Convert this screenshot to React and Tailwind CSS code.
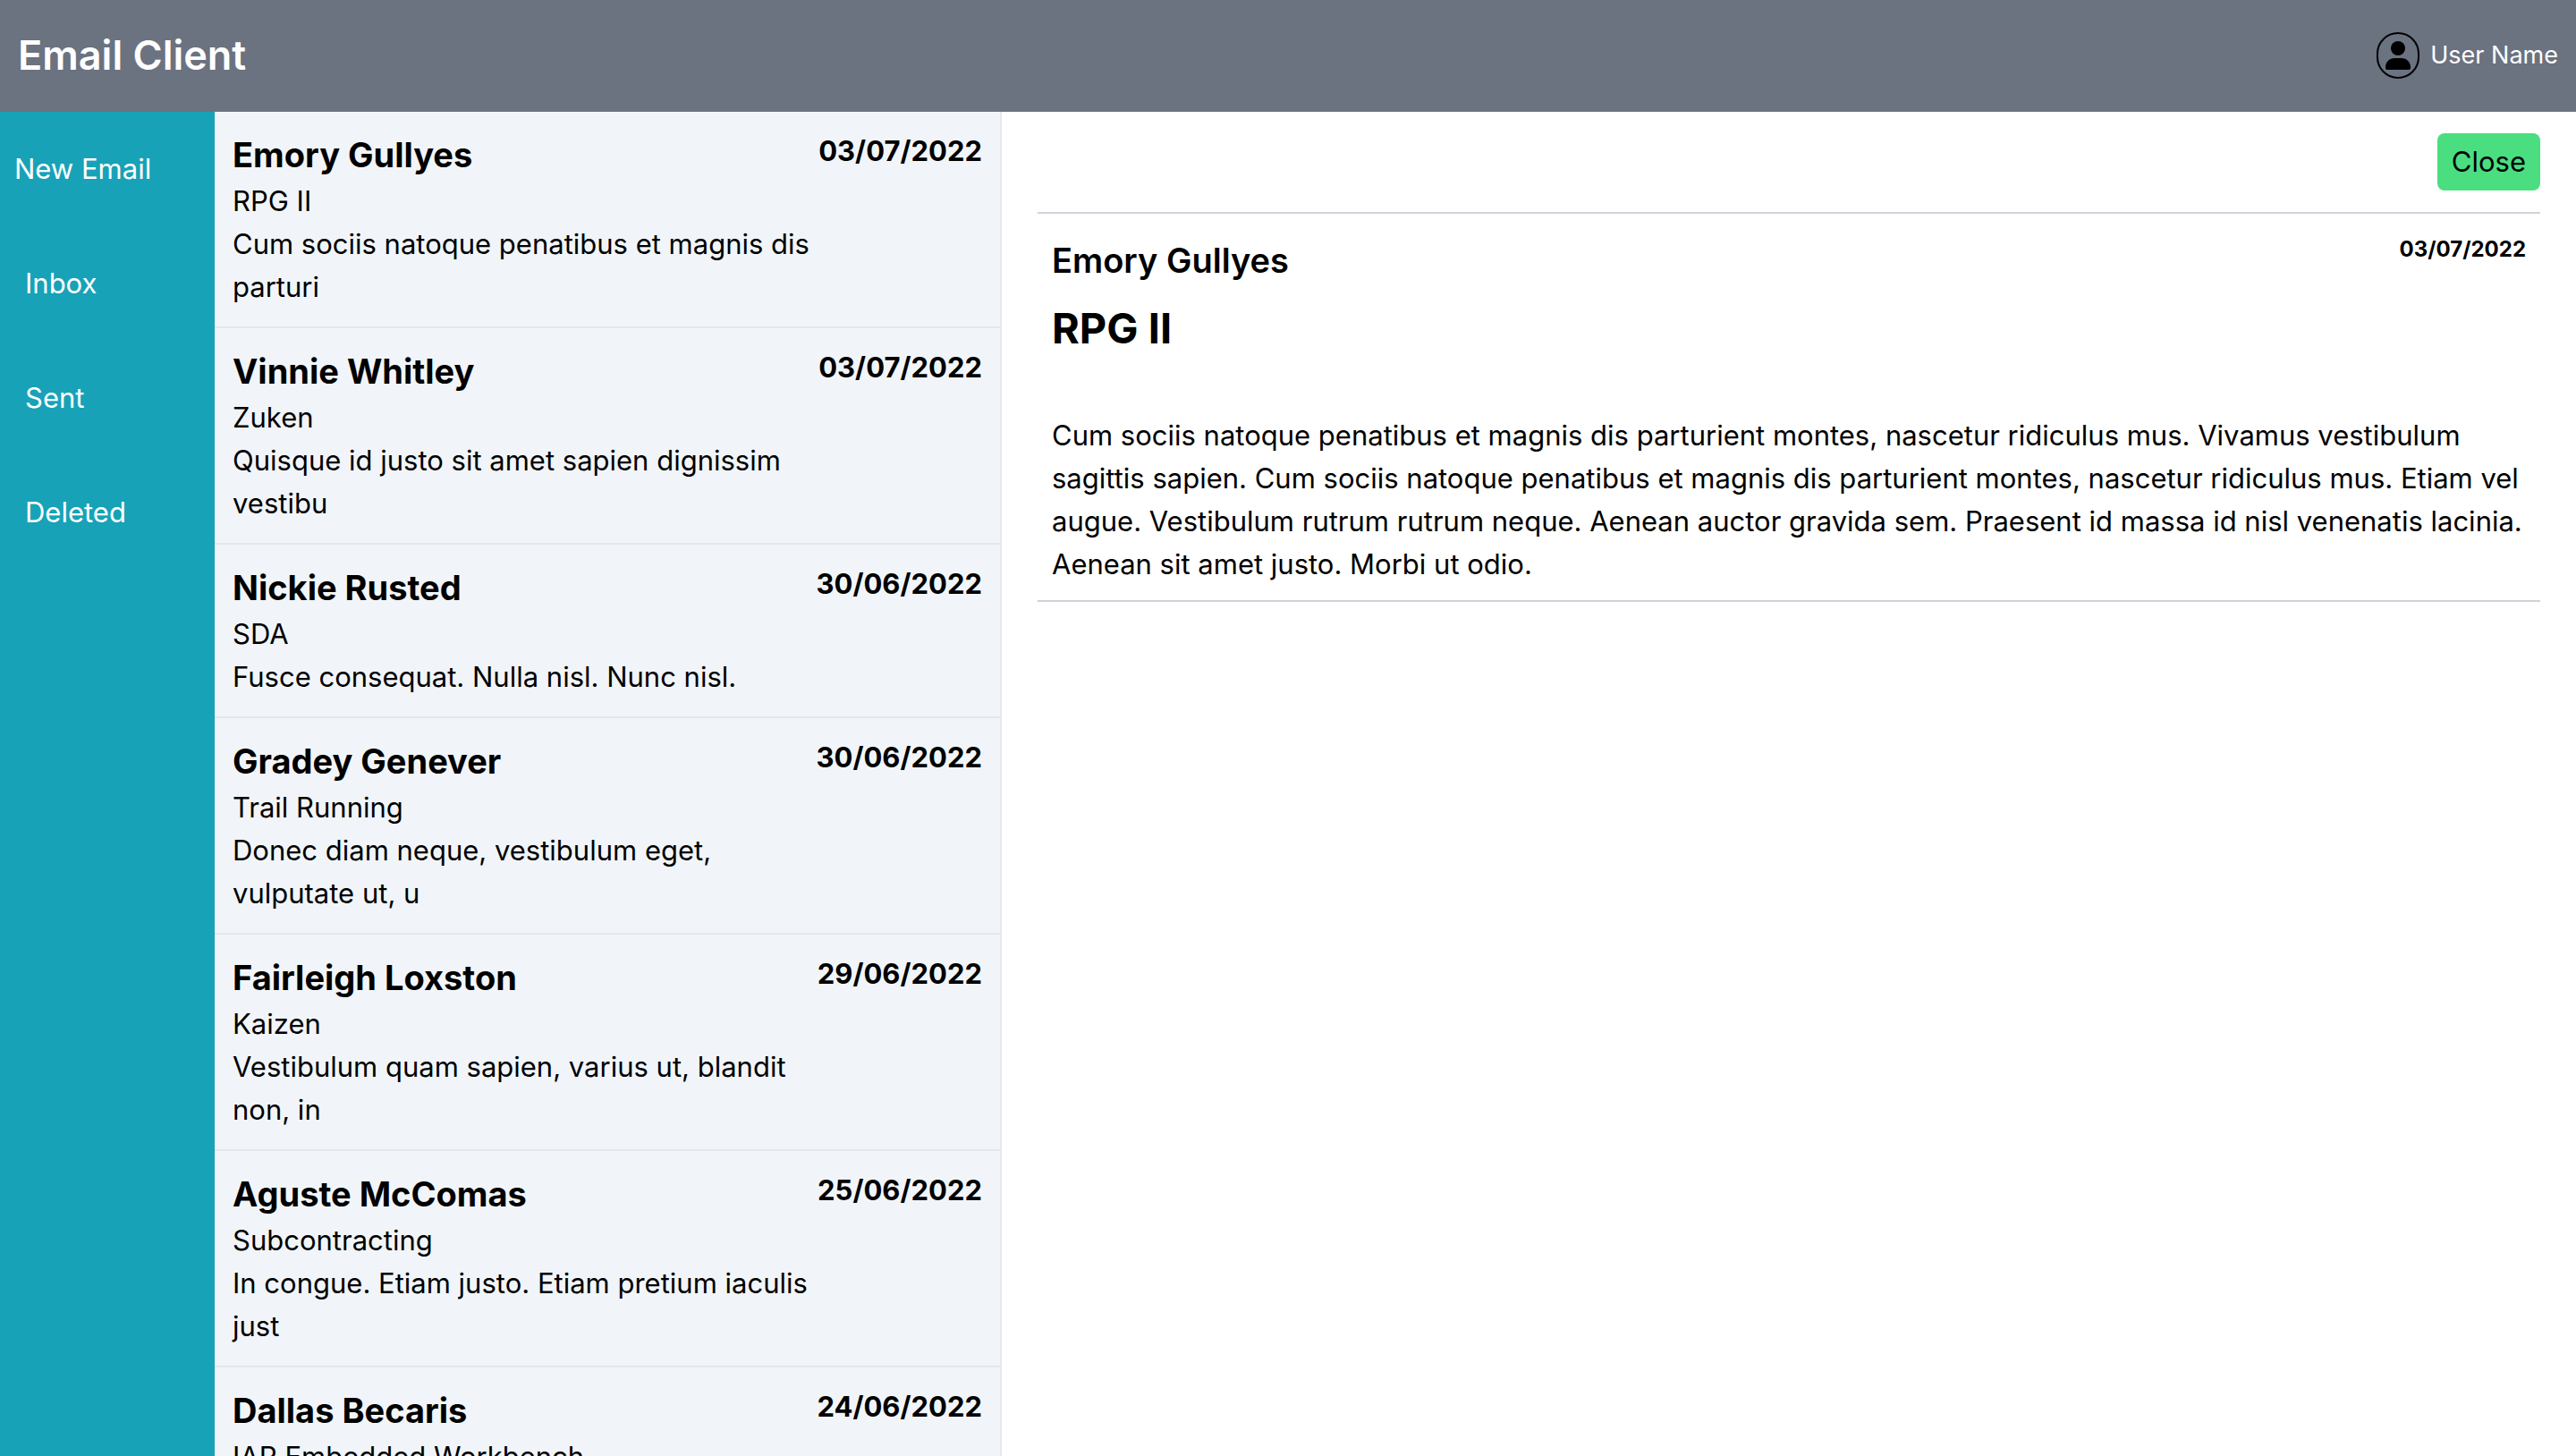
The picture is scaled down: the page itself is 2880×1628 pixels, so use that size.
const folders = ["Inbox", "Sent", "Deleted"];

const emails = [
  { id: 1, name: "Emory Gullyes", subject: "RPG II", preview: "Cum sociis natoque penatibus et magnis dis parturi", date: "03/07/2022" },
  { id: 2, name: "Vinnie Whitley", subject: "Zuken", preview: "Quisque id justo sit amet sapien dignissim vestibu", date: "03/07/2022" },
  { id: 3, name: "Nickie Rusted", subject: "SDA", preview: "Fusce consequat. Nulla nisl. Nunc nisl.", date: "30/06/2022" },
  { id: 4, name: "Gradey Genever", subject: "Trail Running", preview: "Donec diam neque, vestibulum eget, vulputate ut, u", date: "30/06/2022" },
  { id: 5, name: "Fairleigh Loxston", subject: "Kaizen", preview: "Vestibulum quam sapien, varius ut, blandit non, in", date: "29/06/2022" },
  { id: 6, name: "Aguste McComas", subject: "Subcontracting", preview: "In congue. Etiam justo. Etiam pretium iaculis just", date: "25/06/2022" },
  { id: 7, name: "Dallas Becaris", subject: "IAR Embedded Workbench", preview: "", date: "24/06/2022" },
];

const body =
  "Cum sociis natoque penatibus et magnis dis parturient montes, nascetur ridiculus mus. Vivamus vestibulum sagittis sapien. Cum sociis natoque penatibus et magnis dis parturient montes, nascetur ridiculus mus. Etiam vel augue. Vestibulum rutrum rutrum neque. Aenean auctor gravida sem. Praesent id massa id nisl venenatis lacinia. Aenean sit amet justo. Morbi ut odio.";

function UserIcon() {
  return (
    <svg viewBox="0 0 48 52" className="h-[52px] w-12" aria-hidden="true">
      <rect x="1" y="1" width="46" height="50" rx="23" ry="23" fill="none" stroke="black" strokeWidth="2" />
      <circle cx="24" cy="18" r="8" />
      <path d="M10 40v-1c0-6 5-10 10-10h8c5 0 10 4 10 10v1c0 1.200-.8 2-2 2H12c-1.200 0-2-.8-2-2z" />
    </svg>
  );
}

function Header() {
  return (
    <header className="flex h-[125px] shrink-0 items-center justify-between bg-[#6b7280] px-5 pb-0.5 text-white">
      <h1 className="text-[45px] leading-[64px] font-semibold">Email Client</h1>
      <div className="flex items-center gap-3">
        <UserIcon />
        <span className="text-[27px] leading-10">User Name</span>
      </div>
    </header>
  );
}

function Sidebar() {
  return (
    <nav className="flex w-1/12 shrink-0 flex-col bg-[#17a2b8] text-white">
      <button type="button" className="h-32 px-4 text-left">New Email</button>
      {folders.map((folder) => (
        <a key={folder} href={"#" + folder.toLowerCase()} className="flex h-32 items-center px-7">
          {folder}
        </a>
      ))}
    </nav>
  );
}

function EmailRow({ email }) {
  return (
    <li className="flex justify-between border-b-2 border-[#e5e7eb] p-5">
      <div className="w-[650px]">
        <h2 className="text-[38px] leading-[56px] font-bold">{email.name}</h2>
        <p>{email.subject}</p>
        <p>{email.preview}</p>
      </div>
      <time className="shrink-0 font-bold">{email.date}</time>
    </li>
  );
}

function EmailDetail() {
  return (
    <main className="min-w-0 flex-1 px-10 pt-6">
      <div className="flex justify-end border-b-2 border-[#ced4da] pb-6">
        <button type="button" className="rounded-lg bg-[#4ade80] px-4 py-2">Close</button>
      </div>
      <article className="border-b-2 border-[#ced4da] px-4 pt-6 pb-4">
        <div className="flex items-start justify-between">
          <h2 className="text-[38px] leading-[56px] font-semibold">Emory Gullyes</h2>
          <time className="text-[24px] leading-8 font-bold">03/07/2022</time>
        </div>
        <h3 className="mt-4 text-[47px] leading-[64px] font-bold">RPG II</h3>
        <p className="mt-16">{body}</p>
      </article>
    </main>
  );
}

export default function App() {
  return (
    <div className="flex h-screen flex-col bg-white font-['Inter',sans-serif] text-[31px] leading-[48px] text-black">
      <Header />
      <div className="flex min-h-0 flex-1">
        <Sidebar />
        <ul className="w-[880px] shrink-0 overflow-hidden border-r-2 border-[#e5e7eb] bg-[#f1f5f9]">
          {emails.map((email) => (
            <EmailRow key={email.id} email={email} />
          ))}
        </ul>
        <EmailDetail />
      </div>
    </div>
  );
}
